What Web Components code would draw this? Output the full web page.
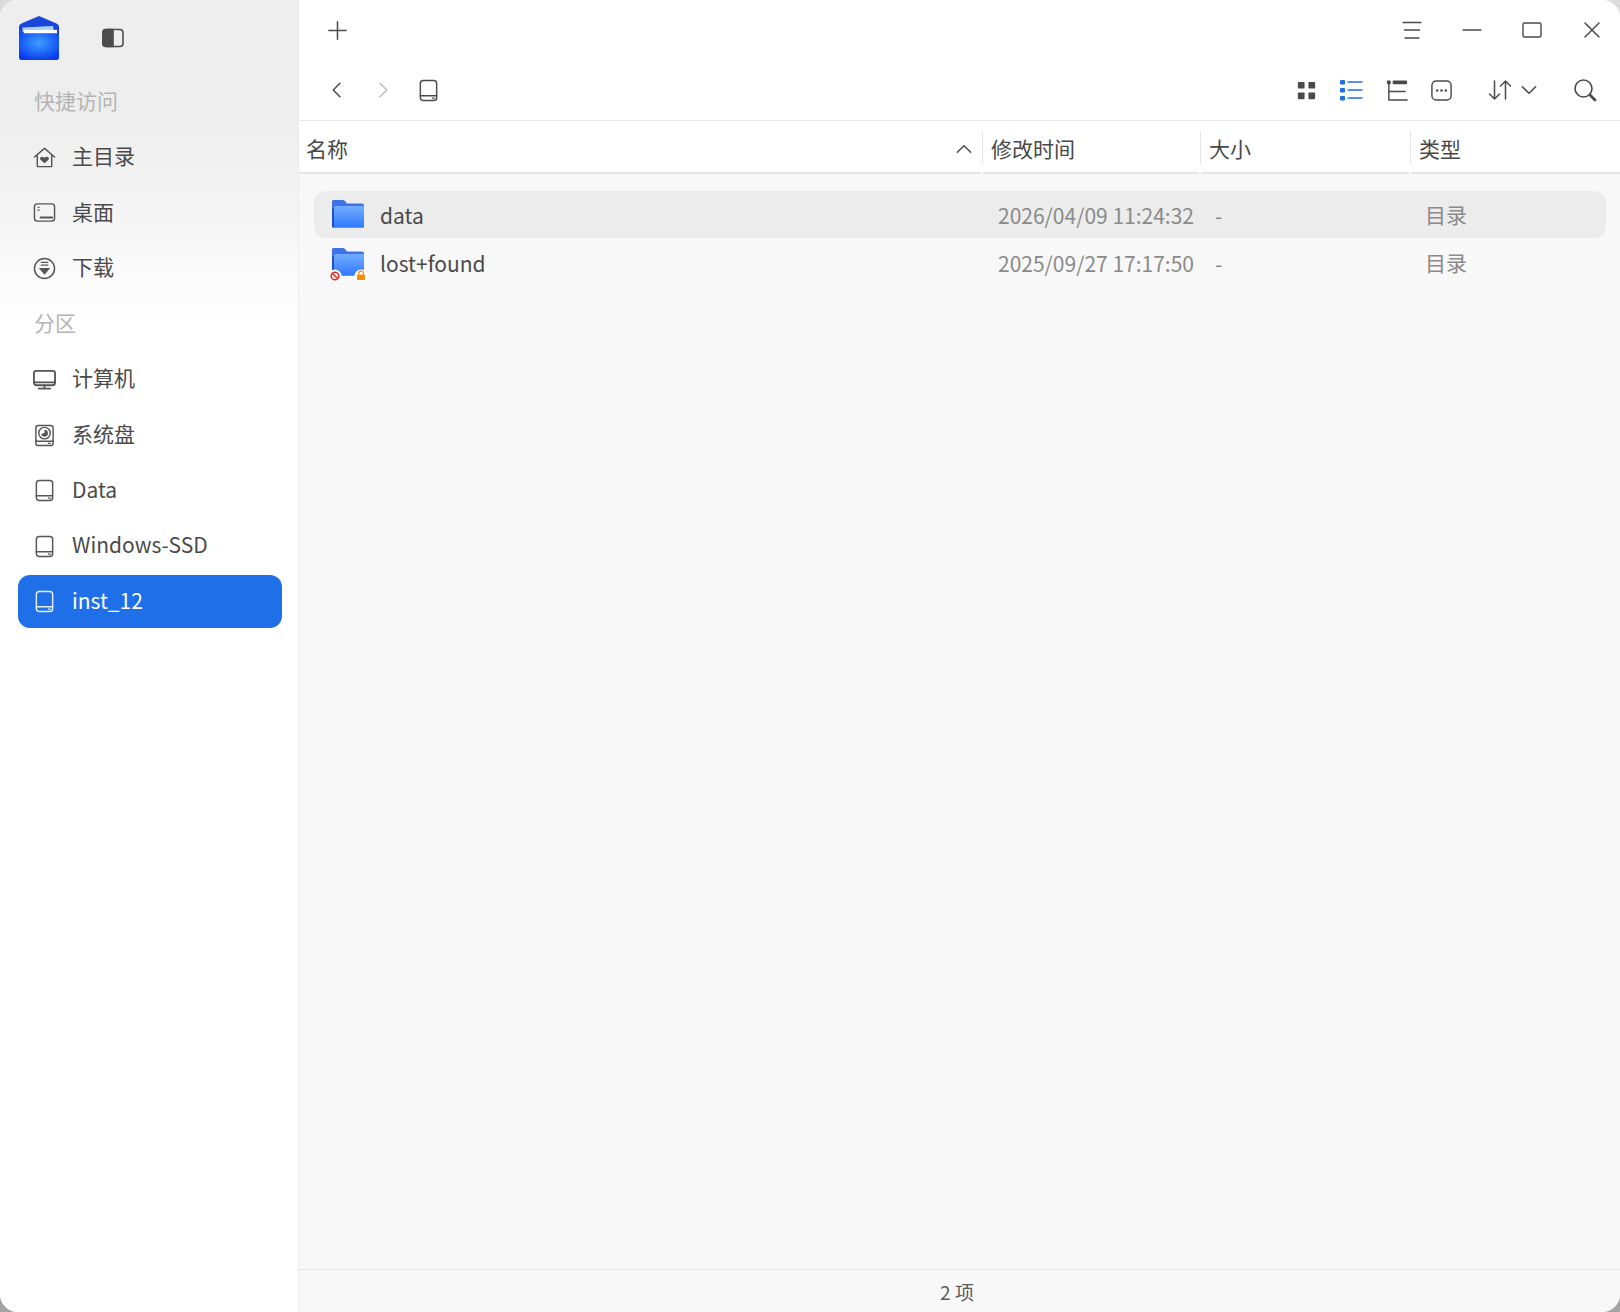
<!DOCTYPE html>
<html lang="zh">
<head>
<meta charset="utf-8">
<title>文件管理器</title>
<style>
html, body { margin: 0; height: 100%; }
body {
    background: linear-gradient(#dcdcdc, #d0d0d0 30%, #a4a4a4);
    font-family: "Noto Sans CJK SC", "Noto Sans", sans-serif;
    overflow: hidden;
}
</style>
</head>
<body>

<fm-window>
    <fm-sidebar slot="sidebar">
        <fm-side-label>快捷访问</fm-side-label>
        <fm-side-item icon="home">主目录</fm-side-item>
        <fm-side-item icon="desktop">桌面</fm-side-item>
        <fm-side-item icon="download">下载</fm-side-item>
        <fm-side-label>分区</fm-side-label>
        <fm-side-item icon="computer">计算机</fm-side-item>
        <fm-side-item icon="sysdisk">系统盘</fm-side-item>
        <fm-side-item icon="disk">Data</fm-side-item>
        <fm-side-item icon="disk">Windows-SSD</fm-side-item>
        <fm-side-item icon="disk" active>inst_12</fm-side-item>
    </fm-sidebar>
    <fm-toolbar slot="main"></fm-toolbar>
    <fm-header slot="main"></fm-header>
    <fm-list slot="main">
        <fm-row name="data" time="2026/04/09 11:24:32" size="-" kind="目录" selected></fm-row>
        <fm-row name="lost+found" time="2025/09/27 17:17:50" size="-" kind="目录" locked></fm-row>
    </fm-list>
    <fm-status slot="main">2 项</fm-status>
</fm-window>

<script>
const ICONS = {
    plus: '<path d="M12 3v18M3 12h18"/>',
    back: '<path d="M15.5 4 7.5 12l8 8"/>',
    forward: '<path d="M8.5 4l8 8-8 8"/>',
    disk: '<rect x="3.5" y="1.5" width="17" height="21" rx="3"/><path d="M3.5 17.5h17"/><path d="M16 20h2" stroke-width="1.2"/>',
    menu: '<path d="M3 4.5h18M4.5 12h15M5 20h14"/>',
    minimize: '<path d="M3 12h18"/>',
    maximize: '<rect x="3" y="5" width="18" height="14" rx="1.5"/>',
    close: '<path d="M5 5l14 14M19 5 5 19"/>',
    grid: '<g fill="currentColor" stroke="none"><rect x="3" y="3" width="7" height="7" rx=".8"/><rect x="14" y="3" width="7" height="7" rx=".8"/><rect x="3" y="14" width="7" height="7" rx=".8"/><rect x="14" y="14" width="7" height="7" rx=".8"/></g>',
    list: '<g fill="currentColor" stroke="none"><rect x="1" y="2" width="5" height="4.5" rx=".8"/><rect x="1" y="10" width="5" height="4.5" rx=".8"/><rect x="1" y="18" width="5" height="4.5" rx=".8"/></g><path d="M9 4h14M9 12h14M9 20h14"/>',
    tree: '<rect x="2" y="1.5" width="4" height="4" rx="1" fill="currentColor" stroke="none"/><rect x="8" y="1.5" width="15" height="4" rx="1" fill="currentColor" stroke="none"/><path d="M4 5v17h19M4 13h17"/>',
    more: '<rect x="2" y="2" width="20" height="20" rx="4.5"/><g fill="currentColor" stroke="none"><circle cx="7.5" cy="12" r="1.3"/><circle cx="12" cy="12" r="1.3"/><circle cx="16.5" cy="12" r="1.3"/></g>',
    sort: '<path d="M7.5 3v18M2.5 16l5 5 5-5"/><path d="M17 21V3M12 8l5-5 5 5" transform="translate(1.5 0)"/>',
    chevron: '<path d="M4 8l8 8 8-8"/>',
    caret: '<path d="M4 16l8-8 8 8"/>',
    search: '<circle cx="10.5" cy="10.5" r="8.5"/><path d="M17 17l5 5" stroke-width="2.8"/>',
    panel: '<rect x="2" y="3.5" width="20" height="17" rx="3"/><path d="M5 3.500h7v17H5a3 3 0 0 1-3-3v-11a3 3 0 0 1 3-3z" fill="currentColor"/>',
    home: '<path d="M1.5 11.5 12 2.5l10.5 9M4.5 10v11.5h15V10"/><path d="M12 18l-4.200-3.700c-1.800-2 1.800-4.500 4.200-2 2.400-2.500 6-.0 4.200 2z" fill="currentColor" stroke="none"/>',
    desktop: '<rect x="1.5" y="3" width="21" height="18" rx="3"/><path d="M8 17.2h12" stroke-width="2.2"/><path d="M5 6.500h1.600M5 9.500h1.600" stroke-width="1.2"/>',
    download: '<circle cx="12" cy="12" r="10.500"/><path d="M8.500 5.500h7M8.500 8.500h7" stroke-width="1.300"/><path d="M6 11.500h12L12 18.500z" fill="currentColor" stroke="none"/>',
    computer: '<rect x="1" y="3" width="22" height="15" rx="2.500" stroke-width="1.900"/><path d="M1.500 15h21" stroke-width="2"/><path d="M12 18v3M6 21.500h12" stroke-width="1.900"/>',
    sysdisk: '<rect x="3" y="1.500" width="18" height="21" rx="2.500"/><path d="M3 18h18M16 20.200h2"/><circle cx="12" cy="9.500" r="6"/><path d="M12 9.500V6a3.600 3.600 0 1 1-3.500 4.500z" fill="currentColor" stroke="none"/>'
};

// small helper so each class only has to state its markup
function shadow(el, html) {
    const root = el.attachShadow({ mode: 'open' });
    root.innerHTML = html;
    return root;
}

class FmIcon extends HTMLElement {
    connectedCallback() {
        if (this.shadowRoot) return;
        const size = this.getAttribute('size') || 24;
        const stroke = this.getAttribute('stroke') || 1.6;
        shadow(this, `
        <style>
        :host { display: inline-flex; align-items: center; justify-content: center; flex: none; }
        svg { display: block; }
        </style>
        <svg width="${size}" height="${size}" viewBox="0 0 24 24" fill="none" stroke="currentColor"
             stroke-width="${stroke}" stroke-linecap="round" stroke-linejoin="round">${ICONS[this.getAttribute('name')]}</svg>`);
    }
}

class FmWindow extends HTMLElement {
    constructor() {
        super();
        shadow(this, `
        <style>
        :host {
            display: grid;
            grid-template-columns: 299px 1fr;
            height: 1312px;
            border-radius: 18px;
            overflow: hidden;
            background: #f8f8f8;
        }
        .side { display: flex; border-right: 1px solid #ececec; min-height: 0; }
        .main { display: flex; flex-direction: column; min-width: 0; min-height: 0; }
        </style>
        <div class="side"><slot name="sidebar"></slot></div>
        <div class="main"><slot name="main"></slot></div>`);
    }
}

class FmLogo extends HTMLElement {
    constructor() {
        super();
        shadow(this, `
        <style>:host { display: block; width: 42px; height: 44px; } svg { display: block; }</style>
        <svg width="42" height="44" viewBox="0 0 42 46" preserveAspectRatio="none">
            <defs>
                <radialGradient id="b" cx="50%" cy="38%" r="65%">
                    <stop offset="0" stop-color="#3f9dff"/>
                    <stop offset=".6" stop-color="#1c66f6"/>
                    <stop offset="1" stop-color="#0a3be8"/>
                </radialGradient>
            </defs>
            <path d="M21 0 38 7.500c2 .9 3 2 3 4V20H1v-8.500c0-2 1-3.100 3-4z" fill="#1c45dc"/>
            <path d="M4.500 12 35 10.500l1.500 8H4.500z" fill="#a4d2ff"/>
            <path d="M1 17h40v26a3 3 0 0 1-3 3H4a3 3 0 0 1-3-3z" fill="url(#b)"/>
            <rect x="6" y="14.500" width="33" height="3.500" fill="#fff"/>
        </svg>`);
    }
}

class FmSidebar extends HTMLElement {
    constructor() {
        super();
        shadow(this, `
        <style>
        :host {
            display: block;
            flex: 1;
            background: linear-gradient(#eeeeee, #eeeeee 35%, #f3f3f3 60%, #ffffff) 0 0 / 100% 325px no-repeat #fff;
        }
        .head { display: flex; align-items: center; height: 75px; padding-left: 18px; box-sizing: border-box; }
        fm-logo { margin-top: 1px; }
        fm-icon { margin: 1px 0 0 41px; color: #4d4d4d; }
        .items { display: flex; flex-direction: column; gap: 2.6px; padding: 0 16px 0 18px; }
        </style>
        <div class="head"><fm-logo></fm-logo><fm-icon name="panel"></fm-icon></div>
        <div class="items"><slot></slot></div>`);
    }
}

class FmSideLabel extends HTMLElement {
    constructor() {
        super();
        shadow(this, `
        <style>
        :host { display: flex; align-items: center; height: 53px; box-sizing: border-box; padding: 0 0 3px 16px; font-size: 21px; color: #b4b4b4; }
        </style>
        <slot></slot>`);
    }
}

class FmSideItem extends HTMLElement {
    connectedCallback() {
        if (this.shadowRoot) return;
        shadow(this, `
        <style>
        :host {
            display: flex;
            align-items: center;
            height: 53px;
            box-sizing: border-box;
            padding: 0 0 4px 15px;
            border-radius: 12px;
            font-size: 21px;
            color: #4a4a4a;
        }
        :host([active]) { background: #1f6fe9; color: #fff; }
        fm-icon { color: #555; margin: 4px 16px 0 0; }
        :host([active]) fm-icon { color: #e4eeff; }
        </style>
        <fm-icon name="${this.getAttribute('icon')}" size="23" stroke="1.5"></fm-icon><slot></slot>`);
    }
}

class FmToolbar extends HTMLElement {
    constructor() {
        super();
        shadow(this, `
        <style>
        :host {
            display: block;
            height: 120px;
            background: #fff;
            border-bottom: 1px solid #e8e8e8;
            color: #4a4a4a;
        }
        .bar { display: flex; align-items: center; height: 60px; }
        .spacer { flex: 1; }
        .top { padding: 0 6px 0 16px; }
        .top .wm { display: flex; gap: 16px; }
        .btn { display: flex; align-items: center; justify-content: center; width: 44px; height: 44px; }
        .nav { padding: 0 13px 0 16px; }
        .nav .off { color: #bdbdbd; }
        .views { display: flex; gap: 1px; }
        .sort { display: flex; align-items: center; margin-left: 21px; }
        .sort .btn { width: 30px; }
        .find { margin-left: 19px; }
        </style>
        <div class="bar top">
            <div class="btn"><fm-icon name="plus" size="23"></fm-icon></div>
            <div class="spacer"></div>
            <div class="wm">
                <div class="btn"><fm-icon name="menu" size="24" stroke="1.4"></fm-icon></div>
                <div class="btn"><fm-icon name="minimize" size="24" stroke="1.4"></fm-icon></div>
                <div class="btn"><fm-icon name="maximize" size="24" stroke="1.4"></fm-icon></div>
                <div class="btn"><fm-icon name="close" size="24" stroke="1.5"></fm-icon></div>
            </div>
        </div>
        <div class="bar nav">
            <div class="btn"><fm-icon name="back" size="20" stroke="1.8"></fm-icon></div>
            <div class="btn off" style="margin-left:2px"><fm-icon name="forward" size="20" stroke="1.8"></fm-icon></div>
            <div class="btn" style="margin-left:1px"><fm-icon name="disk" size="23" stroke="1.5"></fm-icon></div>
            <div class="spacer"></div>
            <div class="views">
                <div class="btn"><fm-icon name="grid" size="23"></fm-icon></div>
                <div class="btn" style="color:#1f6fe9"><fm-icon name="list" size="24" stroke="1.4"></fm-icon></div>
                <div class="btn"><fm-icon name="tree" size="23" stroke="1.5"></fm-icon></div>
                <div class="btn"><fm-icon name="more" size="23" stroke="1.5"></fm-icon></div>
            </div>
            <div class="sort">
                <div class="btn"><fm-icon name="sort" size="24" stroke="1.5"></fm-icon></div>
                <div class="btn"><fm-icon name="chevron" size="20" stroke="1.8"></fm-icon></div>
            </div>
            <div class="btn find"><fm-icon name="search" size="24" stroke="1.6"></fm-icon></div>
        </div>`);
    }
}

class FmHeader extends HTMLElement {
    constructor() {
        super();
        shadow(this, `
        <style>
        :host {
            display: grid;
            grid-template-columns: 682px 216px 208px 1fr;
            column-gap: 2px;
            height: 53px;
            background: #fff;
            font-size: 21px;
            color: #484848;
        }
        .cell {
            display: flex;
            align-items: center;
            padding: 2px 0 0 8px;
            border-bottom: 2px solid #e6e6e6;
            position: relative;
        }
        .cell + .cell::before {
            content: "";
            position: absolute;
            left: -1px;
            top: 10px;
            bottom: 8px;
            width: 1px;
            background: #e6e6e6;
        }
        .name { justify-content: space-between; padding: 2px 7px 0 7px; }
        fm-icon { margin-top: 2px; }
        </style>
        <div class="cell name"><span>名称</span><fm-icon name="caret" size="20" stroke="1.7"></fm-icon></div>
        <div class="cell">修改时间</div>
        <div class="cell">大小</div>
        <div class="cell">类型</div>`);
    }
}

class FmList extends HTMLElement {
    constructor() {
        super();
        shadow(this, `
        <style>
        :host {
            display: flex;
            flex-direction: column;
            flex: 1;
            gap: 1px;
            padding: 17px 14px 0 15px;
            background: #f8f8f8;
        }
        </style>
        <slot></slot>`);
    }
}

class FmFolder extends HTMLElement {
    connectedCallback() {
        if (this.shadowRoot) return;
        const badges = this.hasAttribute('locked') ? `
            <circle cx="7" cy="36" r="6.500" fill="#fff"/>
            <circle cx="7" cy="36" r="3.800" fill="none" stroke="#e2302d" stroke-width="1.600"/>
            <path d="M4.500 33.500l5 5" stroke="#e2302d" stroke-width="1.600"/>
            <circle cx="33" cy="36" r="6.500" fill="#fff"/>
            <path d="M30.700 34.500v-1a2.300 2.300 0 0 1 4.600 0v1" fill="none" stroke="#f58a0b" stroke-width="1.200"/>
            <rect x="29" y="34.500" width="8" height="5.500" rx=".8" fill="#f58a0b"/>` : '';
        shadow(this, `
        <style>:host { display: block; width: 40px; height: 42px; } svg { display: block; overflow: visible; }</style>
        <svg width="40" height="42" viewBox="0 0 40 42">
            <defs>
                <linearGradient id="f" x1="0" y1="0" x2="0" y2="1">
                    <stop offset="0" stop-color="#74adff"/>
                    <stop offset="1" stop-color="#2f79ff"/>
                </linearGradient>
            </defs>
            <path d="M4 9.500C4 8.500 4.800 8 5.800 8h9.200c.8 0 1.200.3 1.700.8l2.300 2.700h15c1.200 0 2 .8 2 2V34c0 1-.7 1.500-1.500 1.500H5.500C4.700 35.500 4 35 4 34z" fill="#3e72e8"/>
            <path d="M4 34V16.500h2V35.500H5.500C4.700 35.500 4 35 4 34z" fill="#1f4fc4"/>
            <path d="M6 16.500c0-1.200.8-2.500 2-2.500h26.500c1 0 1.500.8 1.500 2V34c0 1-.7 1.500-1.500 1.500H6z" fill="url(#f)"/>
            ${badges}
        </svg>`);
    }
}

class FmRow extends HTMLElement {
    connectedCallback() {
        if (this.shadowRoot) return;
        const locked = this.hasAttribute('locked') ? 'locked' : '';
        shadow(this, `
        <style>
        :host {
            display: grid;
            grid-template-columns: 684px 217px 210px 1fr;
            align-items: center;
            height: 47px;
            border-radius: 12px;
            font-size: 21px;
            color: #8a8a8a;
        }
        :host([selected]) { background: #ececec; }
        .name { display: flex; align-items: center; gap: 12px; padding-left: 14px; color: #4a4a4a; }
        fm-folder { margin-top: -3px; }
        .kind { margin-top: -2px; }
        </style>
        <div class="name"><fm-folder ${locked}></fm-folder><span>${this.getAttribute('name')}</span></div>
        <div>${this.getAttribute('time')}</div>
        <div>${this.getAttribute('size')}</div>
        <div class="kind">${this.getAttribute('kind')}</div>`);
    }
}

class FmStatus extends HTMLElement {
    constructor() {
        super();
        shadow(this, `
        <style>
        :host {
            display: flex;
            align-items: center;
            justify-content: center;
            height: 42px;
            border-top: 1px solid #e4e4e4;
            padding-right: 5px;
            font-size: 19px;
            color: #5c5c5c;
            background: #f8f8f8;
        }
        </style>
        <slot></slot>`);
    }
}

customElements.define('fm-icon', FmIcon);
customElements.define('fm-logo', FmLogo);
customElements.define('fm-folder', FmFolder);
customElements.define('fm-window', FmWindow);
customElements.define('fm-sidebar', FmSidebar);
customElements.define('fm-side-label', FmSideLabel);
customElements.define('fm-side-item', FmSideItem);
customElements.define('fm-toolbar', FmToolbar);
customElements.define('fm-header', FmHeader);
customElements.define('fm-list', FmList);
customElements.define('fm-row', FmRow);
customElements.define('fm-status', FmStatus);
</script>
</body>
</html>
